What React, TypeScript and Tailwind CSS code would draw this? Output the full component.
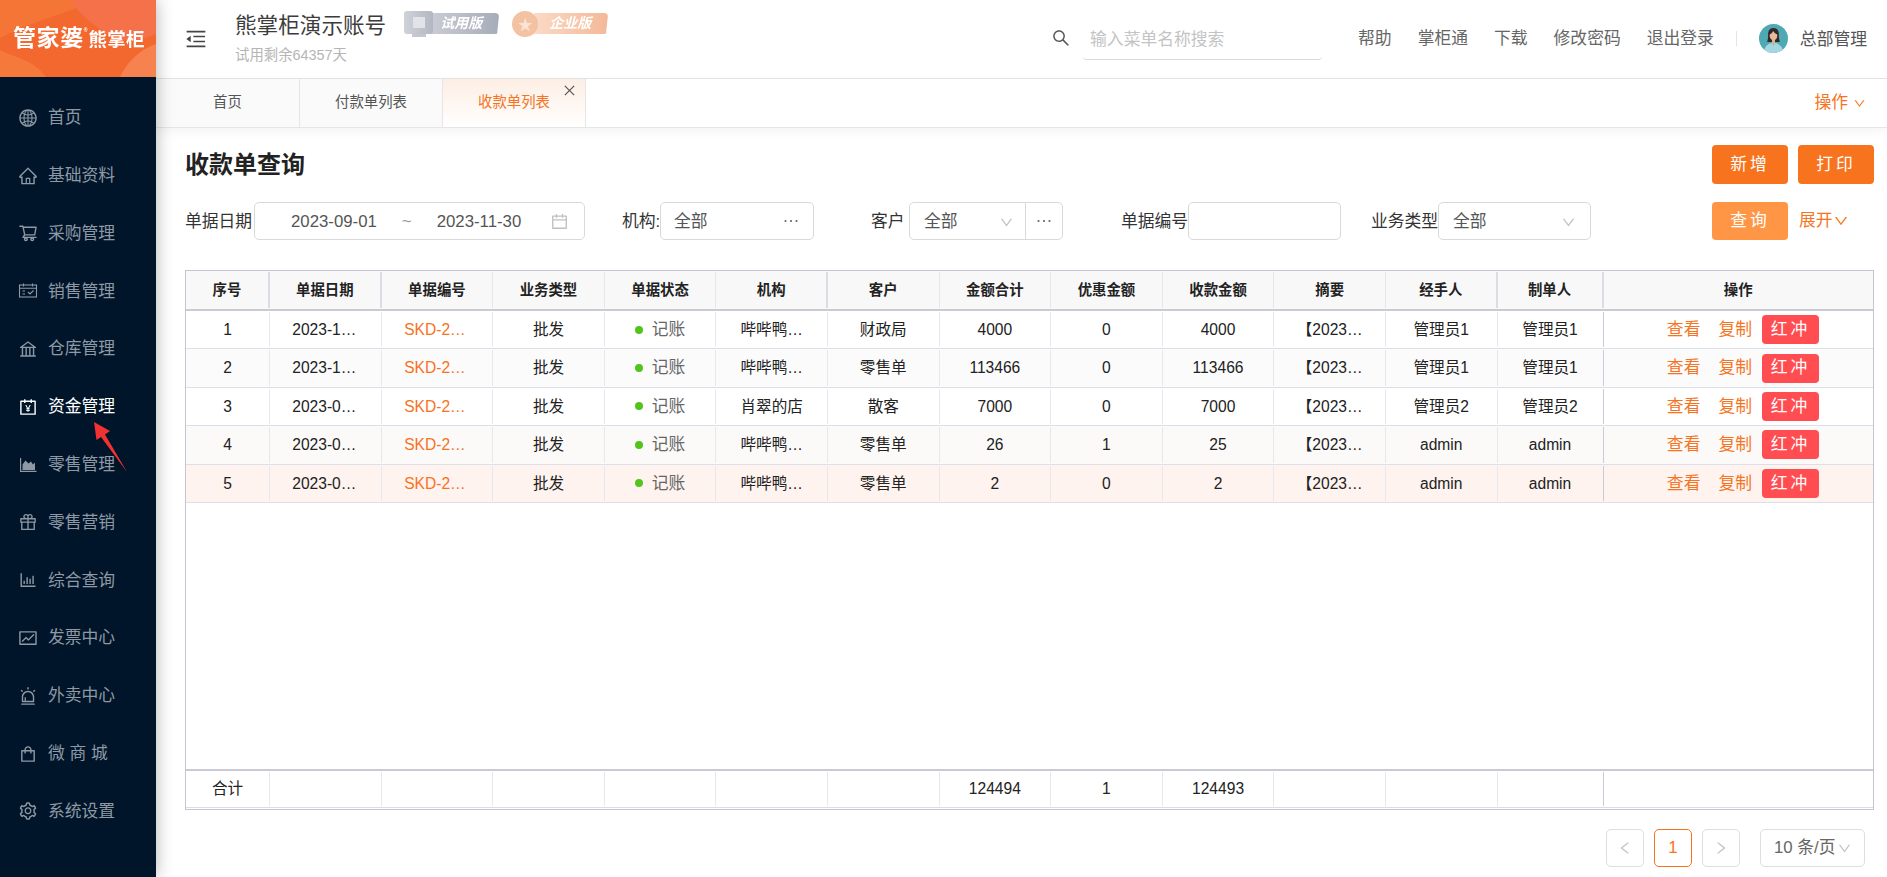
import React from "react";
import {
  AiOutlineGlobal, AiOutlineHome, AiOutlineShoppingCart, AiOutlineBank,
  AiOutlineAccountBook, AiOutlineGift, AiOutlineBarChart, AiOutlineFund,
  AiOutlineAlert, AiOutlineShopping, AiOutlineSetting, AiOutlineMenuFold, AiOutlineSearch,
  AiOutlineCalendar, AiOutlineEllipsis, AiOutlineDown, AiOutlineLeft, AiOutlineRight, AiOutlineClose,
} from "react-icons/ai";

const font = { fontFamily: '"Liberation Sans", "Noto Sans CJK SC", sans-serif' };

function AreaIcon({ className }: { className?: string }) {
  return (
    <svg viewBox="0 0 20 20" className={className} fill="currentColor">
      <path d="M2 3h1.200v12.800H18.500V17H2z" />
      <path d="M4.500 15v-5.500l3-4 3 3 2.500-2 2 3 2-2v7.500z" />
    </svg>
  );
}

function SalesIcon({ className }: { className?: string }) {
  return (
    <svg viewBox="0 0 20 20" className={className} fill="none" stroke="currentColor" strokeWidth="1.100">
      <rect x="1.500" y="4" width="17" height="12" />
      <path d="M1.500 7.200h17M5.500 2.500v3M14.500 2.500v3M4.500 10h2.500M4.500 13h2.500M10 11l2 2 3.500-3.500" />
    </svg>
  );
}

const menu: [React.ComponentType<{ className?: string }>, string][] = [
  [AiOutlineGlobal, "首页"],
  [AiOutlineHome, "基础资料"],
  [AiOutlineShoppingCart, "采购管理"],
  [SalesIcon, "销售管理"],
  [AiOutlineBank, "仓库管理"],
  [AiOutlineAccountBook, "资金管理"],
  [AreaIcon, "零售管理"],
  [AiOutlineGift, "零售营销"],
  [AiOutlineBarChart, "综合查询"],
  [AiOutlineFund, "发票中心"],
  [AiOutlineAlert, "外卖中心"],
  [AiOutlineShopping, "微 商 城"],
  [AiOutlineSetting, "系统设置"],
];

const cols = "grid grid-cols-[84px_repeat(11,111.6px)_106px_1fr]";
const heads = ["序号", "单据日期", "单据编号", "业务类型", "单据状态", "机构", "客户", "金额合计", "优惠金额", "收款金额", "摘要", "经手人", "制单人", "操作"];
const thick = [1, 2, 6, 12, 13];

const rows = [
  ["1", "2023-1…", "哔哔鸭…", "财政局", "4000", "0", "4000", "管理员1", "管理员1", "bg-white"],
  ["2", "2023-1…", "哔哔鸭…", "零售单", "113466", "0", "113466", "管理员1", "管理员1", "bg-[#fbfbfc]"],
  ["3", "2023-0…", "肖翠的店", "散客", "7000", "0", "7000", "管理员2", "管理员2", "bg-white"],
  ["4", "2023-0…", "哔哔鸭…", "零售单", "26", "1", "25", "admin", "admin", "bg-[#fbfaf9]"],
  ["5", "2023-0…", "哔哔鸭…", "零售单", "2", "0", "2", "admin", "admin", "bg-[#fef3ee]"],
];

function Cell({ children, last, strong }: { children?: React.ReactNode; last?: boolean; strong?: boolean }) {
  return (
    <div className="flex items-center justify-center py-[1px] min-w-0">
      <div className={`flex h-full w-full items-center justify-center whitespace-nowrap ${last ? "" : strong ? "border-r border-[#c9cbd6]" : "border-r border-[#e6e8f0]"}`}>
        {children}
      </div>
    </div>
  );
}

function Avatar() {
  return (
    <svg viewBox="0 0 29 29" className="h-[29px] w-[29px] rounded-full">
      <rect width="29" height="29" fill="#4fa9b4" />
      <path d="M14.500 4c-4 0-5.600 3-5.400 6.800.2 3-.3 5-1 7.200h12.800c-.7-2.200-1.200-4.200-1-7.200C20.100 7 18.500 4 14.500 4z" fill="#2f2a28" />
      <ellipse cx="14.500" cy="11.500" rx="3.800" ry="5" fill="#eab99a" />
      <path d="M10.500 10.500c1.400-.4 3-1.900 3.700-3.500 1 1.800 2.600 3.100 4.300 3.500.2-3.200-1.500-5.400-4-5.400s-4.200 2.200-4 5.400z" fill="#2f2a28" />
      <rect x="13" y="15.500" width="3" height="4.500" fill="#e2ae90" />
      <path d="M4.500 29c.5-6 4-9.200 8.200-10l1.800 2 1.800-2c4.200.8 7.700 4 8.200 10z" fill="#a5d6df" />
    </svg>
  );
}

function Logo() {
  return (
    <div className="relative h-[77px] shrink-0 overflow-hidden bg-[#f2682f]">
      <svg viewBox="0 0 156 77" preserveAspectRatio="none" className="absolute inset-0 h-full w-full">
        <path d="M0 0h92C70 14 38 18 0 38z" fill="#f67a3a" opacity=".75" />
        <path d="M70 0h86v34c-20 8-34 8-48 0-16-9-30-22-38-34z" fill="#f4714a" />
        <path d="M0 50c16 8 34 10 46 27H0z" fill="#f5793a" />
        <path d="M120 77c6-14 20-28 36-33v33z" fill="#f6834f" />
      </svg>
      <div className="absolute inset-0 flex items-center pl-[13px] font-bold text-white blur-[0.5px]">
        <span className="text-[23px] leading-none tracking-[0.6px]">管家婆</span>
        <span className="mb-[16px] text-[5px] leading-none">®</span>
        <span className="ml-[1px] mt-[3px] text-[18.500px] leading-none tracking-[0.2px]">熊掌柜</span>
      </div>
    </div>
  );
}

function Badges() {
  return (
    <div className="ml-[18px] mt-[-30px] flex gap-[13px] blur-[0.5px]">
      <div className="relative flex h-[26px] w-[95px]">
        <div className="absolute bottom-0 left-[8px] h-[4px] w-[14px] bg-[#c3c7cf]" />
        <div className="z-10 flex h-[23px] w-[29px] items-center justify-center rounded-[3px] bg-gradient-to-r from-[#cfd2d8] to-[#b3b7c3]">
          <div className="h-[11px] w-[12px] bg-[#e2e3e8]" />
        </div>
        <div className="ml-[-2px] mt-[2px] flex h-[21px] flex-1 items-center rounded-r-[4px] bg-gradient-to-r from-[#c9ccd4] to-[#a7acba] pl-[9px] text-[14px] font-bold italic text-white [clip-path:polygon(0_0,100%_0,97%_100%,0_100%)]">
          试用版
        </div>
      </div>
      <div className="relative flex h-[26px] w-[96px]">
        <div className="z-10 flex h-[26px] w-[26px] items-center justify-center rounded-full bg-[#f3c2a2] text-[15px] leading-none text-[#fbe3d4]">★</div>
        <div className="ml-[-4px] mt-[2px] flex h-[21px] flex-1 items-center rounded-r-[4px] bg-gradient-to-r from-[#fbdac6] to-[#f3b998] pl-[15px] text-[14px] font-bold italic text-white [clip-path:polygon(0_0,100%_0,97%_100%,0_100%)]">
          企业版
        </div>
      </div>
    </div>
  );
}

const box = "flex h-[38px] items-center rounded-[5px] border border-[#d9d9d9] bg-white pt-[2px] text-[16.800px] text-[#555]";

export default function App() {
  return (
    <div className="relative flex h-screen w-full overflow-hidden bg-white text-[#222]" style={font}>
      <aside className="z-10 flex w-[156px] shrink-0 flex-col bg-[#001529] shadow-[0_0_16px_rgba(0,0,0,0.3)]">
        <Logo />
        <nav className="pt-[12px]">
          {menu.map(([Icon, label]) => {
            const active = label === "资金管理";
            return (
              <div key={label} className={`flex h-[57.800px] items-center gap-[10px] pl-[18px] text-[16.800px] ${active ? "text-white" : "text-[#8e99a5]"}`}>
                <Icon className="h-[20px] w-[20px] shrink-0" />
                <span className="whitespace-pre">{label}</span>
              </div>
            );
          })}
        </nav>
      </aside>

      <main className="flex min-w-0 flex-1 flex-col">
        <header className="flex h-[79px] shrink-0 items-center border-b border-[#e6e6e6] pr-[20px]">
          <AiOutlineMenuFold className="ml-[28px] h-[24px] w-[24px] text-[#444]" />
          <div className="ml-[27px] mt-[-3px]">
            <div className="text-[21.600px] leading-[30px] text-[#3c3c3c]">熊掌柜演示账号</div>
            <div className="mt-[5px] text-[14.400px] leading-[18px] text-[#b5b5b5]">试用剩余64357天</div>
          </div>
          <Badges />
          <AiOutlineSearch className="ml-auto mt-[-2px] h-[20px] w-[20px] text-[#555]" />
          <div className="ml-[12px] mt-[3px] flex h-[39px] w-[239px] items-center rounded-[4px] border-b border-[#d9d9d9] pl-[7px] text-[16.800px] text-[#c4c4c4]">输入菜单名称搜索</div>
          <div className="ml-[36px] flex items-center gap-[26px] text-[16.800px] text-[#666]">
            <span>帮助</span><span>掌柜通</span><span>下载</span><span>修改密码</span><span>退出登录</span>
          </div>
          <div className="ml-[22px] h-[15px] w-px bg-[#e4e4e4] mt-[-2px]" />
          <div className="ml-[22px] mt-[-1px]"><Avatar /></div>
          <span className="ml-[12px] mt-[1px] text-[16.800px] text-[#555]">总部管理</span>
        </header>

        <div className="flex h-[49px] shrink-0 items-stretch border-b border-[#e6e6e6] shadow-[0_3px_10px_rgba(0,0,0,0.05)] text-[14.400px]">
          <div className="flex w-[144px] items-center justify-center border-r border-[#e6e6e6] bg-[#fafafa] text-[#555]">首页</div>
          <div className="flex w-[143px] items-center justify-center border-r border-[#e6e6e6] bg-[#fafafa] text-[#555]">付款单列表</div>
          <div className="relative flex w-[143px] items-center justify-center border-r border-[#e6e6e6] bg-gradient-to-b from-[#fdeee4] to-white text-[#f7731e]">
            收款单列表
            <AiOutlineClose className="absolute right-[8px] top-[4px] h-[15px] w-[15px] text-[#555]" />
          </div>
          <div className="ml-auto flex items-center gap-[5px] pr-[21px] text-[16.800px] text-[#f7731e]">
            操作<AiOutlineDown className="h-[13px] w-[13px]" />
          </div>
        </div>

        <div className="min-h-0 flex-1 pl-[29px] pr-[13px]">
          <div className="flex h-[39px] mt-[17px] items-center justify-between">
            <h1 className="text-[24px] font-bold text-[#222] leading-none">收款单查询</h1>
            <div className="flex gap-[10px]">
              <button className="h-[39px] w-[76px] rounded-[4px] bg-[#f7731e] text-[16.800px] tracking-[3px] text-white">新增</button>
              <button className="h-[39px] w-[76px] rounded-[4px] bg-[#f7731e] text-[16.800px] tracking-[3px] text-white">打印</button>
            </div>
          </div>

          <div className="mt-[18px] flex h-[38px] items-center text-[16.800px] text-[#333]">
            <span className="w-[69px] pt-[2px] whitespace-nowrap">单据日期</span>
            <div className={`${box} w-[331px] text-[#555]`}>
              <span className="ml-[36px]">2023-09-01</span>
              <span className="ml-[25px] text-[#999]">~</span>
              <span className="ml-[25px]">2023-11-30</span>
              <AiOutlineCalendar className="ml-[29px] mt-[-2px] h-[19px] w-[19px] text-[#c0c0c0]" />
            </div>
            <span className="ml-[37px] w-[38px] pt-[2px] whitespace-nowrap">机构:</span>
            <div className={`${box} w-[154px] pl-[13px]`}>
              全部
              <AiOutlineEllipsis className="ml-auto mr-[12px] mt-[-2px] h-[20px] w-[20px] text-[#666]" />
            </div>
            <span className="ml-[57px] w-[38px] pt-[2px] whitespace-nowrap">客户</span>
            <div className={`${box} w-[154px] pl-[14px]`}>
              全部
              <AiOutlineDown className="ml-auto mr-[11px] h-[15px] w-[15px] text-[#c0c0c0]" />
              <div className="mt-[-2px] flex h-[36px] w-[37px] items-center justify-center border-l border-[#d9d9d9]">
                <AiOutlineEllipsis className="h-[20px] w-[20px] text-[#666]" />
              </div>
            </div>
            <span className="ml-[58px] w-[67px] pt-[2px] whitespace-nowrap">单据编号</span>
            <div className={`${box} w-[153px]`} />
            <span className="ml-[30px] w-[67px] pt-[2px] whitespace-nowrap">业务类型</span>
            <div className={`${box} w-[153px] pl-[14px]`}>
              全部
              <AiOutlineDown className="ml-auto mr-[14px] h-[15px] w-[15px] text-[#c0c0c0]" />
            </div>
            <button className="ml-auto h-[38px] w-[76px] rounded-[4px] bg-[#ff9645] text-[16.800px] tracking-[3px] text-white">查询</button>
            <div className="ml-[11px] mr-[26px] flex w-[49px] items-center whitespace-nowrap text-[16.800px] text-[#f7731e]">
              展开<AiOutlineDown className="h-[16px] w-[16px] shrink-0" />
            </div>
          </div>

          <div className="mt-[30px] flex h-[540px] flex-col border border-[#c4c5d0] text-[15.600px] text-[#222]">
            <div className={`${cols} h-[40px] shrink-0 border-b-2 border-[#c9cad4] bg-[#f8f8f9] text-[14.400px] font-bold`}>
              {heads.map((h, i) => (
                <div key={h} className="flex items-center py-[1px]">
                  <div className={`flex h-full w-full items-center justify-center pt-[2px] ${i === heads.length - 1 ? "" : thick.includes(i + 1) ? "border-r-2 border-[#dcdde3]" : "border-r border-[#e6e7ec]"}`}>{h}</div>
                </div>
              ))}
            </div>
            {rows.map((r) => (
              <div key={r[0]} className={`${cols} h-[38.400px] shrink-0 border-b border-[#dcdee8] ${r[9]}`}>
                <Cell>{r[0]}</Cell>
                <Cell><span className="pr-[2px]">{r[1]}</span></Cell>
                <Cell><span className="pr-[4px] text-[#f7731e]">SKD-2…</span></Cell>
                <Cell>批发</Cell>
                <Cell>
                  <span className="h-[8px] w-[8px] rounded-full bg-[#52c41a]" />
                  <span className="ml-[9px] text-[16.800px] text-[#666]">记账</span>
                </Cell>
                <Cell>{r[2]}</Cell>
                <Cell>{r[3]}</Cell>
                <Cell>{r[4]}</Cell>
                <Cell>{r[5]}</Cell>
                <Cell>{r[6]}</Cell>
                <Cell>【2023…</Cell>
                <Cell>{r[7]}</Cell>
                <Cell strong>{r[8]}</Cell>
                <Cell last>
                  <div className="flex w-full items-center justify-end pr-[54px] text-[16.800px]">
                    <span className="text-[#f7731e]">查看</span>
                    <span className="ml-[18px] text-[#f7731e]">复制</span>
                    <span className="ml-[10px] flex h-[29px] w-[57px] items-center justify-center rounded-[4px] bg-[#ff4d52] tracking-[3px] text-white">红冲</span>
                  </div>
                </Cell>
              </div>
            ))}
            <div className="flex-1" />
            <div className={`${cols} h-[38px] shrink-0 border-t-2 border-[#c9cad4]`}>
              <Cell>合计</Cell>
              <Cell /><Cell /><Cell /><Cell /><Cell /><Cell />
              <Cell>124494</Cell>
              <Cell>1</Cell>
              <Cell>124493</Cell>
              <Cell /><Cell />
              <Cell strong />
              <Cell last />
            </div>
            <div className="h-[2px] shrink-0 border-t border-[#dcdde3]" />
          </div>

          <div className="mt-[19px] flex items-center justify-end gap-[10px] pr-[9px] text-[16.800px]">
            <div className="flex h-[38px] w-[38px] items-center justify-center rounded-[5px] border border-[#dedede] text-[#c4c4c4]"><AiOutlineLeft className="h-[16px] w-[16px]" /></div>
            <div className="flex h-[38px] w-[38px] items-center justify-center rounded-[5px] border border-[#f7731e] text-[#f7731e]">1</div>
            <div className="flex h-[38px] w-[38px] items-center justify-center rounded-[5px] border border-[#dedede] text-[#c4c4c4]"><AiOutlineRight className="h-[16px] w-[16px]" /></div>
            <div className="ml-[10px] flex h-[38px] w-[105px] items-center rounded-[5px] border border-[#dedede] pl-[13px] text-[#666]">
              10 条/页<AiOutlineDown className="ml-[1px] h-[15px] w-[15px] text-[#c4c4c4]" />
            </div>
          </div>
        </div>
      </main>

      <svg className="pointer-events-none absolute left-[90px] top-[418px] z-20 h-[58px] w-[42px]" viewBox="90 418 42 58">
        <polygon points="94,422 110,431 105,434.500 127,472 101,437 96.500,440" fill="#f03232" />
      </svg>
    </div>
  );
}
